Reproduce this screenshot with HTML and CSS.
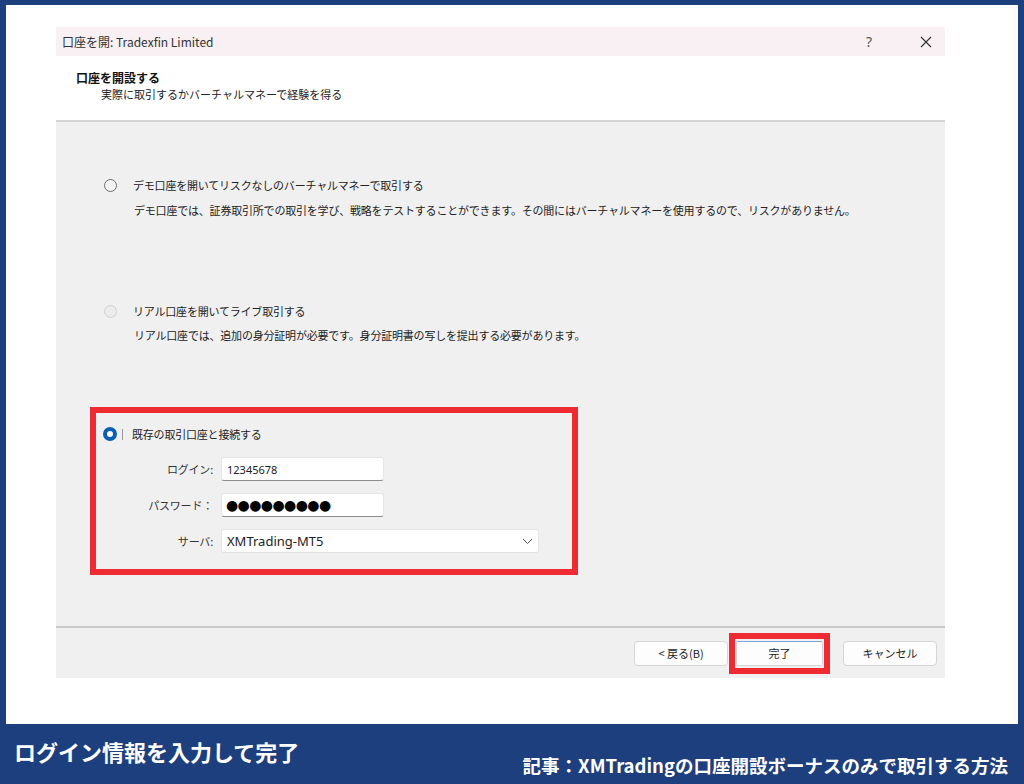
FILE: index.html
```html
<!DOCTYPE html>
<html lang="ja">
<head>
<meta charset="utf-8">
<title>口座を開</title>
<link rel="stylesheet" href="styles.css">
</head>
<body>
<div class="page">
  <div class="canvas">
    <div class="dialog">
      <div class="titlebar">
        <span class="title">口座を開: Tradexfin Limited</span>
        <span class="help">?</span>
        <span class="close">
          <svg width="12" height="12" viewBox="0 0 12 12"><path d="M1 1 L11 11 M11 1 L1 11" stroke="#333" stroke-width="1.2" fill="none"/></svg>
        </span>
      </div>
      <div class="header">
        <div class="heading">口座を開設する</div>
        <div class="subheading">実際に取引するかバーチャルマネーで経験を得る</div>
      </div>
      <div class="body">
        <div class="option opt-demo">
          <div class="opt-row">
            <span class="radio"></span>
            <span class="opt-label">デモ口座を開いてリスクなしのバーチャルマネーで取引する</span>
          </div>
          <div class="opt-desc">デモ口座では、証券取引所での取引を学び、戦略をテストすることができます。その間にはバーチャルマネーを使用するので、リスクがありません。</div>
        </div>
        <div class="option opt-real">
          <div class="opt-row">
            <span class="radio radio-disabled"></span>
            <span class="opt-label">リアル口座を開いてライブ取引する</span>
          </div>
          <div class="opt-desc">リアル口座では、追加の身分証明が必要です。身分証明書の写しを提出する必要があります。</div>
        </div>
        <div class="option-existing">
          <div class="opt-row">
            <span class="radio radio-checked"></span>
            <span class="focus-mark"></span>
            <span class="opt-label">既存の取引口座と接続する</span>
          </div>
          <div class="fields">
            <label class="field-label">ログイン:</label>
            <div class="input input-short">12345678</div>
            <label class="field-label">パスワード：</label>
            <div class="input input-short input-pass">●●●●●●●●●</div>
            <label class="field-label">サーバ:</label>
            <div class="input input-select">
              <span>XMTrading-MT5</span>
              <svg class="chev" width="11" height="7" viewBox="0 0 11 7"><path d="M1 1 L5.5 5.5 L10 1" stroke="#555" stroke-width="1" fill="none"/></svg>
            </div>
          </div>
        </div>
      </div>
      <div class="footer">
        <button class="btn btn-back">&lt;&nbsp;戻る(B)</button>
        <div class="highlight"><button class="btn btn-finish">完了</button></div>
        <button class="btn btn-cancel">キャンセル</button>
      </div>
    </div>
  </div>
  <div class="bar">
    <div class="bar-left">ログイン情報を入力して完了</div>
    <div class="bar-right">記事：XMTradingの口座開設ボーナスのみで取引する方法</div>
  </div>
</div>
</body>
</html>
```

FILE: styles.css
```css
* { box-sizing: border-box; }
html, body { margin: 0; padding: 0; }
body {
  width: 1024px;
  height: 784px;
  overflow: hidden;
  background: #1e3f7d;
  font-family: "Noto Sans CJK JP", "Noto Sans", sans-serif;
  color: #222;
}
.page {
  padding: 5px 6px 0 6px;
}
.canvas {
  height: 719px;
  background: #ffffff;
  padding: 22px 0 0 50px;
}
.dialog {
  width: 889px;
}
.titlebar {
  height: 29px;
  background: #f8f0f2;
  display: flex;
  align-items: center;
  padding-left: 6px;
  font-size: 12px;
  color: #333;
}
.title { flex: 1; }
.help {
  width: 20px;
  text-align: center;
  font-size: 14px;
  color: #555;
  font-family: "Noto Sans", sans-serif;
}
.close {
  width: 12px;
  height: 12px;
  display: flex;
  margin-left: 41px;
  margin-right: 13px;
}
.header {
  height: 66px;
  background: #ffffff;
  padding: 14px 0 0 20px;
  border-bottom: 2px solid #d3d3d3;
}
.heading {
  font-size: 12px;
  font-weight: bold;
  line-height: 16px;
  color: #111;
}
.subheading {
  font-size: 11px;
  line-height: 16px;
  padding-left: 25px;
  color: #222;
}
.body {
  height: 506px;
  background: #f0f0f0;
  padding: 55px 0 0 34px;
  border-bottom: 2px solid #c9c9c9;
  font-size: 11px;
  letter-spacing: -0.2px;
}
.option { padding-left: 14px; }
.opt-row {
  display: flex;
  align-items: center;
  height: 16px;
}
.radio {
  width: 13px;
  height: 13px;
  border-radius: 50%;
  border: 1px solid #6f6f6f;
  background: #f3f3f3;
  flex: none;
  margin-right: 16px;
}
.radio-disabled {
  border-color: #cfcfcf;
  background: #ececec;
}
.radio-checked {
  width: 14px;
  height: 14px;
  border: 4px solid #0a5fb4;
  background: #ffffff;
  margin-right: 5px;
}
.focus-mark {
  width: 1px;
  height: 11px;
  background: #999;
  margin-right: 9px;
}
.opt-label { line-height: 16px; }
.opt-desc {
  margin-top: 9px;
  padding-left: 30px;
  line-height: 16px;
}
.opt-real { margin-top: 85px; }
.opt-real .opt-desc { margin-top: 8px; }
.option-existing {
  margin-top: 64px;
  width: 488px;
  height: 168px;
  border: 6px solid #ee2b33;
  padding: 13px 0 0 7px;
}
.fields {
  margin-top: 15px;
  margin-left: -7px;
  display: grid;
  grid-template-columns: 117px auto;
  column-gap: 8px;
  row-gap: 12px;
  align-items: center;
  justify-items: start;
}
.field-label {
  justify-self: end;
  font-size: 11px;
  color: #333;
}
.input {
  height: 24px;
  background: #ffffff;
  border: 1px solid #e6e6e6;
  border-bottom: 1px solid #8c8c8c;
  border-radius: 3px;
  padding-left: 5px;
  display: flex;
  align-items: center;
  font-family: "Noto Sans", sans-serif;
  font-size: 11px;
  letter-spacing: 0;
  color: #222;
}
.input-short { width: 163px; }
.input-pass {
  font-family: "DejaVu Sans", sans-serif;
  font-size: 14px;
  letter-spacing: -0.6px;
  color: #000;
  padding-left: 4px;
}
.input-select {
  width: 318px;
  border-bottom-color: #e0e0e0;
  justify-content: space-between;
  padding-right: 5px;
  font-size: 13px;
}
.footer {
  height: 50px;
  background: #f0f0f0;
  display: flex;
  align-items: center;
  justify-content: flex-end;
  padding-right: 8px;
}
.btn {
  height: 25px;
  background: #fdfdfd;
  border: 1px solid #d5d5d5;
  border-radius: 4px;
  font-family: "Noto Sans CJK JP", sans-serif;
  font-size: 11px;
  color: #222;
  padding: 0;
}
.btn-back { width: 94px; }
.highlight {
  margin-left: 1px;
  border: 6px solid #ee2b33;
  padding: 2px 1px;
  display: flex;
}
.btn-finish {
  width: 87px;
  border-top-color: #7aa6d8;
  border-radius: 2px;
}
.btn-cancel {
  width: 94px;
  margin-left: 13px;
}
.bar {
  height: 60px;
  display: flex;
  justify-content: space-between;
  padding: 0 10px 0 8px;
  color: #ffffff;
  font-weight: bold;
  font-family: "Noto Sans CJK JP", sans-serif;
}
.bar-left {
  font-size: 22px;
  line-height: 28px;
  margin-top: 13px;
}
.bar-right {
  align-self: flex-end;
  font-size: 18.5px;
  line-height: 24px;
  margin-bottom: 7px;
}
```
